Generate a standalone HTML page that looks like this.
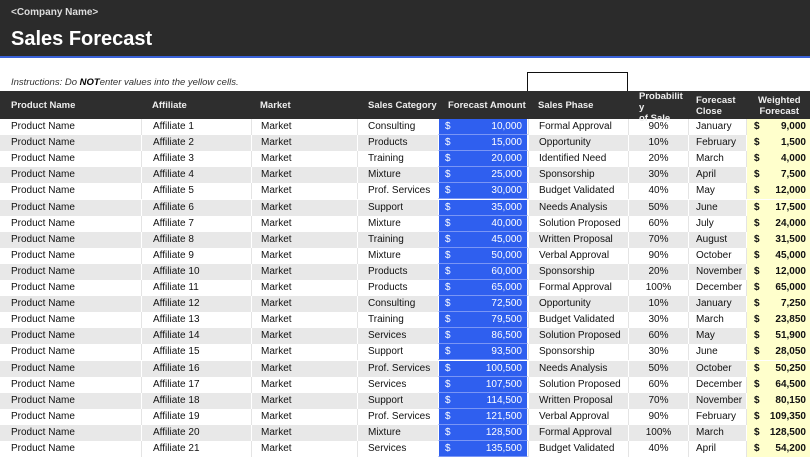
<!DOCTYPE html>
<html><head><meta charset="utf-8"><style>
*{margin:0;padding:0;box-sizing:border-box}
body{width:810px;height:457px;overflow:hidden;background:#fff;font-family:"Liberation Sans",Arial,sans-serif;position:relative;font-size:10px;color:#111}
.top{position:absolute;left:0;top:0;width:810px;height:56px;background:#2b2b2b}
.blue{position:absolute;left:0;top:56px;width:810px;height:2px;background:#3a62d8}
.cn{position:absolute;left:11px;top:7px;color:#ddd;font-size:10px;font-weight:bold}
.title{position:absolute;left:11px;top:28px;color:#fff;font-size:20px;font-weight:bold}
.ins{position:absolute;left:11px;top:77px;font-style:italic;font-size:9.5px;color:#333}
.box{position:absolute;left:527px;top:72px;width:101px;height:20px;border:1.5px solid #111}
.hdr{position:absolute;left:0;top:91px;width:810px;height:28px;background:#2e2e2e;color:#eee;font-weight:bold;font-size:9.5px}
.hdr div{position:absolute;line-height:11px}
.row{position:absolute;left:0;width:810px;height:16.1px}
.row.g{background:#e8e8e8}
.row div{position:absolute;top:0;height:16.1px;line-height:16px;white-space:nowrap;border-left:1px solid #fff}
.row:not(.g) div{border-left:1px solid #e4e4e4}
.fa{background:#2f5fef;color:#fff;border-left:1px solid #fff!important;border-right:1px solid #fff;border-bottom:1px solid #7a96f5}
.wf{background:#ffffcc;font-weight:bold}
</style></head><body>
<div class="top"></div><div class="blue"></div>
<div class="cn">&lt;Company Name&gt;</div>
<div class="title">Sales Forecast</div>
<div class="ins">Instructions: Do <b style="color:#000">NOT</b>enter values into the yellow cells.</div>
<div class="box"></div>
<div class="hdr">
<div style="left:11px;top:9px">Product Name</div>
<div style="left:152px;top:9px">Affiliate</div>
<div style="left:260px;top:9px">Market</div>
<div style="left:368px;top:9px">Sales Category</div>
<div style="left:448px;top:9px">Forecast Amount</div>
<div style="left:538px;top:9px">Sales Phase</div>
<div style="left:639px;top:0px">Probabilit<br>y<br>of Sale</div>
<div style="left:696px;top:4px">Forecast<br>Close</div>
<div style="left:758px;top:4px;text-align:center">Weighted<br>Forecast</div>
</div>
<div id="rows"></div>
<script>
var d=[["Consulting","10,000","Formal Approval","90%","January","9,000"],["Products","15,000","Opportunity","10%","February","1,500"],["Training","20,000","Identified Need","20%","March","4,000"],["Mixture","25,000","Sponsorship","30%","April","7,500"],["Prof. Services","30,000","Budget Validated","40%","May","12,000"],["Support","35,000","Needs Analysis","50%","June","17,500"],["Mixture","40,000","Solution Proposed","60%","July","24,000"],["Training","45,000","Written Proposal","70%","August","31,500"],["Mixture","50,000","Verbal Approval","90%","October","45,000"],["Products","60,000","Sponsorship","20%","November","12,000"],["Products","65,000","Formal Approval","100%","December","65,000"],["Consulting","72,500","Opportunity","10%","January","7,250"],["Training","79,500","Budget Validated","30%","March","23,850"],["Services","86,500","Solution Proposed","60%","May","51,900"],["Support","93,500","Sponsorship","30%","June","28,050"],["Prof. Services","100,500","Needs Analysis","50%","October","50,250"],["Services","107,500","Solution Proposed","60%","December","64,500"],["Support","114,500","Written Proposal","70%","November","80,150"],["Prof. Services","121,500","Verbal Approval","90%","February","109,350"],["Mixture","128,500","Formal Approval","100%","March","128,500"],["Services","135,500","Budget Validated","40%","April","54,200"]];
var h="";
d.forEach(function(r,i){
h+='<div class="row'+(i%2?' g':'')+'" style="top:'+(119+i*16.1)+'px">'+
'<div style="left:0;width:141px;padding-left:11px;border:none">Product Name</div>'+
'<div style="left:141px;width:110px;padding-left:11px">Affiliate '+(i+1)+'</div>'+
'<div style="left:251px;width:106px;padding-left:9px">Market</div>'+
'<div style="left:357px;width:81px;padding-left:10px">'+r[0]+'</div>'+
'<div class="fa" style="left:438px;width:90px;padding:0 5px 0 6px"><span>$</span><span style="float:right">'+r[1]+'</span></div>'+
'<div style="left:528px;width:100px;padding-left:10px">'+r[2]+'</div>'+
'<div style="left:628px;width:60px;text-align:center">'+r[3]+'</div>'+
'<div style="left:688px;width:58px;padding-left:7px">'+r[4]+'</div>'+
'<div class="wf" style="left:746px;width:64px;padding:0 4px 0 7px"><span>$</span><span style="float:right">'+r[5]+'</span></div>'+
'</div>';});
document.getElementById("rows").innerHTML=h;
</script>
</body></html>
